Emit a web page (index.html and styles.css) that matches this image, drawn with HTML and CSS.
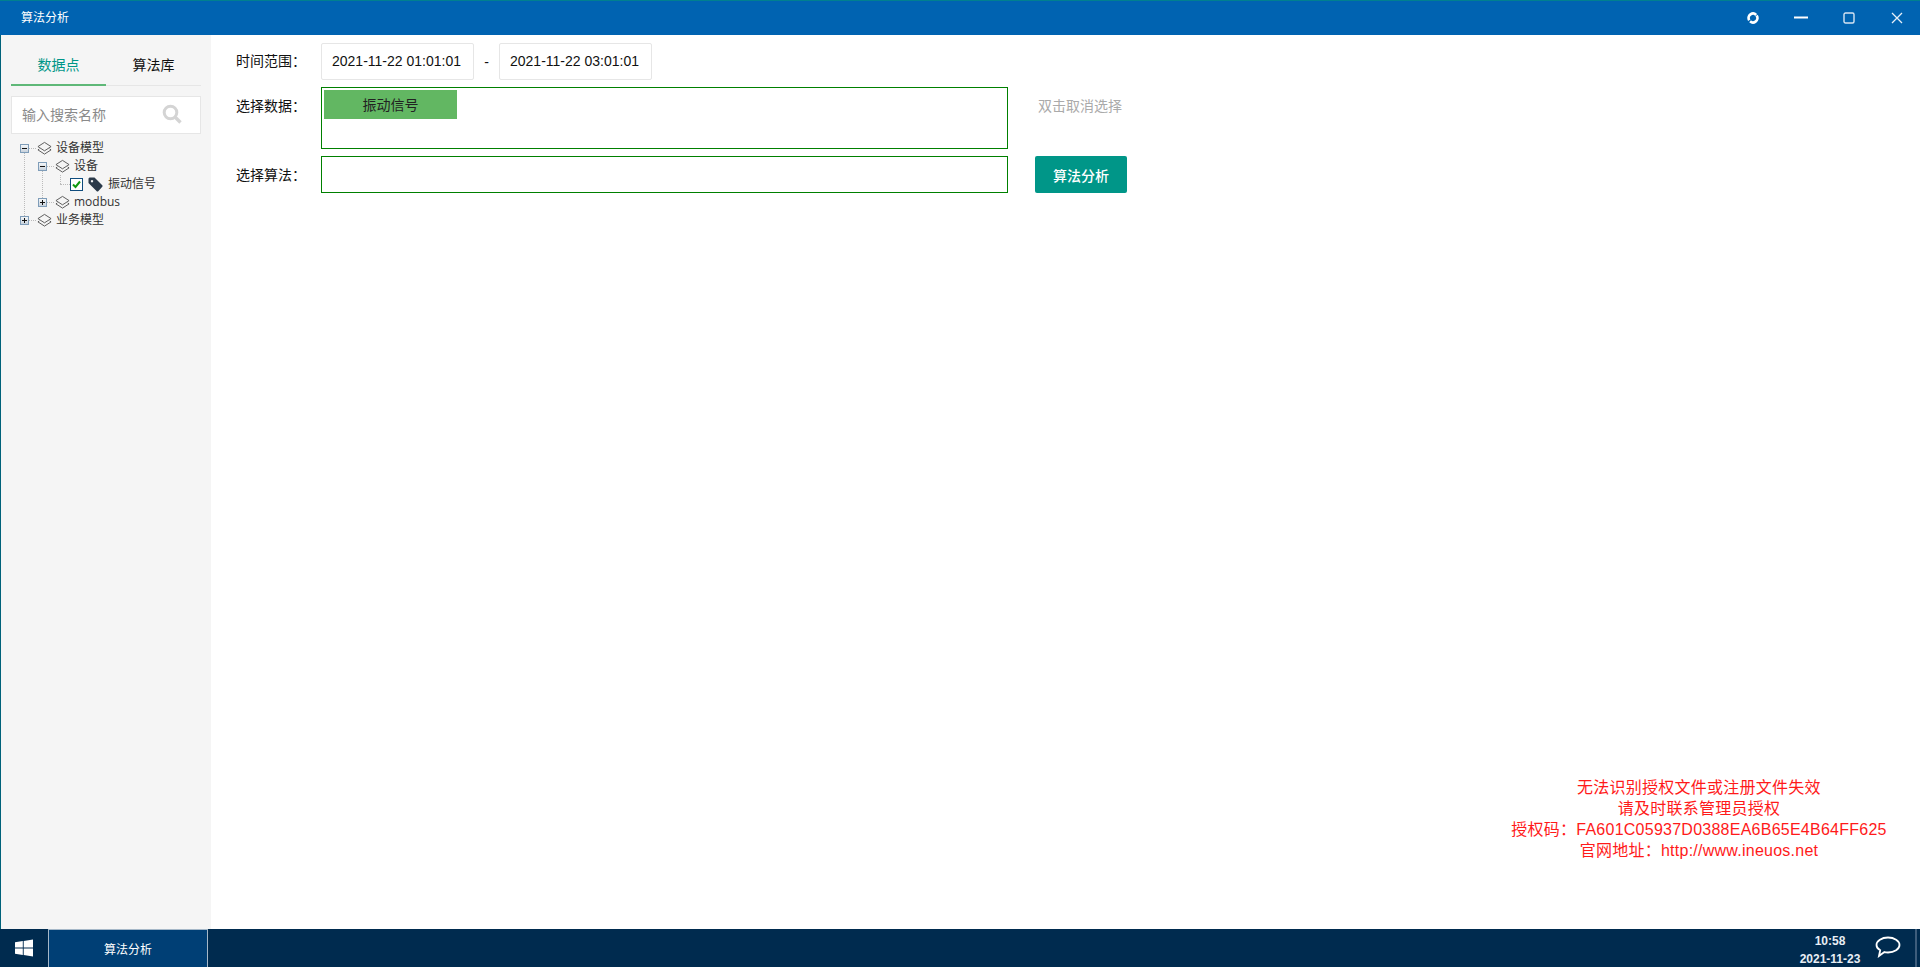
FILE: index.html
```html
<!DOCTYPE html>
<html lang="zh">
<head>
<meta charset="utf-8">
<title>算法分析</title>
<link rel="stylesheet" href="styles.css">
</head>
<body>
<div class="window">
  <header class="titlebar">
    <span class="title">算法分析</span>
    <div class="controls">
      <button class="ctl"><svg width="14" height="14" viewBox="0 0 14 14"><circle cx="7" cy="7" r="4.400" fill="none" stroke="#fff" stroke-width="2.700" stroke-dasharray="12.400 1.420" transform="rotate(-35 7 7)"/></svg></button>
      <button class="ctl"><svg width="14" height="14" viewBox="0 0 14 14"><path d="M0 6.500h14" stroke="#fff" stroke-width="2"/></svg></button>
      <button class="ctl"><svg width="12" height="12" viewBox="0 0 12 12"><rect x="1" y="1" width="10" height="10" rx="1.500" fill="none" stroke="#d5e4f2" stroke-width="1.400"/></svg></button>
      <button class="ctl"><svg width="12" height="12" viewBox="0 0 12 12"><path d="M1 1l10 10M11 1L1 11" stroke="#e6eff8" stroke-width="1.300"/></svg></button>
    </div>
  </header>

  <div class="body">
    <aside class="side">
      <div class="tabs">
        <div class="tab active">数据点</div>
        <div class="tab">算法库</div>
      </div>
      <div class="search">
        <span class="placeholder">输入搜索名称</span>
        <svg class="search-icon" width="20" height="20" viewBox="0 0 20 20"><circle cx="8.500" cy="8.500" r="6.300" fill="none" stroke="#d4d4d4" stroke-width="3"/><path d="M13.500 13.500l5 5" stroke="#d4d4d4" stroke-width="3.400"/></svg>
      </div>
      <ul class="tree">
        <li class="node">
          <div class="row">
            <span class="sw"><svg width="7" height="7" viewBox="0 0 7 7"><path d="M1 3.500h5" stroke="#111" stroke-width="1"/></svg></span>
            <svg class="layers" width="15" height="16" viewBox="0 0 16 16"><use href="#layer"/></svg>
            <span class="lbl">设备模型</span>
          </div>
          <ul class="tree sub">
            <li class="node">
              <div class="row">
                <span class="sw"><svg width="7" height="7" viewBox="0 0 7 7"><path d="M1 3.500h5" stroke="#111" stroke-width="1"/></svg></span>
                <svg class="layers" width="15" height="16" viewBox="0 0 16 16"><use href="#layer"/></svg>
                <span class="lbl">设备</span>
              </div>
              <ul class="tree sub">
                <li class="node leaf">
                  <div class="row">
                    <span class="check"><svg width="11" height="11" viewBox="0 0 11 11"><path d="M2 5.500l2.500 2.500L9 2.500" fill="none" stroke="#119911" stroke-width="2"/></svg></span>
                    <svg class="tag" width="15" height="15" viewBox="0 0 15 15"><path d="M0.500 1.500L1.500 .5h5l8 8v1l-4.500 5h-1l-8.500-8.500zM4 3a1.200 1.200 0 1 0 .01 0z" fill="#2b3a4a" fill-rule="evenodd"/></svg>
                    <span class="lbl">振动信号</span>
                  </div>
                </li>
              </ul>
            </li>
            <li class="node">
              <div class="row">
                <span class="sw"><svg width="7" height="7" viewBox="0 0 7 7"><path d="M1 3.500h5M3.500 1v5" stroke="#111" stroke-width="1"/></svg></span>
                <svg class="layers" width="15" height="16" viewBox="0 0 16 16"><use href="#layer"/></svg>
                <span class="lbl">modbus</span>
              </div>
            </li>
          </ul>
        </li>
        <li class="node">
          <div class="row">
            <span class="sw"><svg width="7" height="7" viewBox="0 0 7 7"><path d="M1 3.500h5M3.500 1v5" stroke="#111" stroke-width="1"/></svg></span>
            <svg class="layers" width="15" height="16" viewBox="0 0 16 16"><use href="#layer"/></svg>
            <span class="lbl">业务模型</span>
          </div>
        </li>
      </ul>
    </aside>

    <main class="main">
      <div class="form-row">
        <label class="lab">时间范围：</label>
        <div class="date">2021-11-22 01:01:01</div>
        <span class="dash">-</span>
        <div class="date">2021-11-22 03:01:01</div>
      </div>
      <div class="form-row">
        <label class="lab lab-top">选择数据：</label>
        <div class="pick pick-data"><div class="chip">振动信号</div></div>
        <span class="hint">双击取消选择</span>
      </div>
      <div class="form-row">
        <label class="lab lab-algo">选择算法：</label>
        <div class="pick pick-algo"></div>
        <button class="go">算法分析</button>
      </div>
    </main>

    <div class="notice">
      <div>无法识别授权文件或注册文件失效</div>
      <div>请及时联系管理员授权</div>
      <div>授权码：FA601C05937D0388EA6B65E4B64FF625</div>
      <div>官网地址：http://www.ineuos.net</div>
    </div>
  </div>

  <footer class="taskbar">
    <div class="start"><svg width="18" height="18" viewBox="0 0 18 18"><path d="M0 3.200l7.800-1.100v6.500H0zM8.700 2L18 .5v8.100H8.700zM0 9.500h7.800v6.400L0 14.800zM8.700 9.500H18v8l-9.300-1.400z" fill="#fff"/></svg></div>
    <div class="task">算法分析</div>
    <div class="clock"><div>10:58</div><div>2021-11-23</div></div>
    <svg class="chat" width="26" height="22" viewBox="0 0 26 22"><path d="M13 1.500c6.300 0 11.500 3.300 11.500 7.500S19.300 16.500 13 16.500c-1.300 0-2.500-.1-3.600-.4L4 20l1.200-5.700C2.900 13 1.500 11.100 1.500 9 1.500 4.800 6.700 1.500 13 1.500z" fill="none" stroke="#fff" stroke-width="1.800"/></svg>
    <div class="peek"></div>
  </footer>
</div>

<svg class="defs" width="0" height="0">
  <defs>
    <g id="layer" fill="none" stroke="#555" stroke-width="1">
      <path d="M8 2L15 6.500 8 11 1 6.500z"/>
      <path d="M2.500 9L1 10 8 14.500 15 10 13.500 9"/>
    </g>
  </defs>
</svg>
</body>
</html>
```
FILE: styles.css
```css
* { box-sizing: border-box; }
html, body { margin: 0; padding: 0; height: 100%; overflow: hidden; }
body { background: #fff; color: #222; font-family: "Noto Sans CJK SC", "Liberation Sans", sans-serif; font-size: 14px; text-spacing-trim: space-all; }
.defs { position: absolute; }
ul { list-style: none; margin: 0; padding: 0; }

.window { display: flex; flex-direction: column; height: 967px; }

.titlebar { flex: 0 0 35px; display: flex; align-items: center; justify-content: space-between; background: #0063b1; border-top: 1px solid #00808f; padding-left: 21px; color: #fff; font-size: 12px; }
.title { line-height: 34px; position: relative; top: -1px; }
.controls { display: flex; margin-right: -1px; }
.ctl { width: 48px; height: 34px; padding: 0; border: 0; background: none; display: flex; align-items: center; justify-content: center; }

.body { flex: 1; display: flex; min-height: 0; position: relative; border-left: 1px solid #00627a; }
.side { width: 210px; flex: none; background: #f5f5f5; padding: 8px 10px 0; }

.tabs { display: flex; height: 43px; border-bottom: 1px solid #e6e6e6; }
.tab { flex: 0 0 95px; text-align: center; line-height: 43px; font-size: 14px; color: #111; }
.tab.active { color: #009688; border-bottom: 2px solid #5fb878; height: 43px; }

.search { position: relative; margin-top: 10px; height: 38px; width: 190px; background: #fff; border: 1px solid #e6e6e6; display: flex; align-items: center; padding-left: 10px; color: #808080; }
.placeholder { font-size: 14px; line-height: 34px; height: 36px; color: #8a8a8a; }
.search-icon { position: absolute; right: 18px; top: 7px; }

.tree { font-size: 12px; color: #333; }
.side > .tree { margin: 5px 0 0 9px; }
.tree.sub { margin-left: 18px; }
.node { position: relative; }
.row { position: relative; height: 18px; display: flex; align-items: center; }
.node:not(:last-child)::before { content: ""; position: absolute; left: 4px; top: 14px; bottom: -5px; border-left: 1px dotted #bbb; }
.row::before { content: ""; position: absolute; left: 9px; top: 9px; width: 7px; border-top: 1px dotted #bbb; }
.leaf::before { content: ""; position: absolute; left: 4px; top: 0; height: 9px; border-left: 1px dotted #bbb; }
.leaf .row::before { left: 4px; width: 10px; }
.sw { width: 9px; height: 9px; flex: none; border: 1px solid #7f9db9; background: linear-gradient(#f4f6f8, #c8d2dc); display: flex; align-items: center; justify-content: center; }
.layers { flex: none; margin: 0 4px 0 8px; position: relative; }
.lbl { line-height: 18px; white-space: nowrap; font-family: "Open Sans", "Noto Sans CJK SC", sans-serif; }
.check { position: relative; width: 13px; height: 13px; flex: none; margin-left: 14px; border: 1px solid #0f4c7d; background: #fff; display: flex; align-items: center; justify-content: center; }
.tag { flex: none; margin: 0 5px 0 5px; }

.main { flex: 1; padding: 8px 0 0 25px; min-width: 0; }
.form-row { display: flex; align-items: center; margin-bottom: 7px; height: 37px; }
.form-row:nth-child(2) { height: 62px; align-items: flex-start; }
.lab { width: 85px; flex: none; font-size: 14px; line-height: 35px; height: 37px; color: #111; }
.lab-top { line-height: 36px; }
.lab-algo { line-height: 37px; }
.date { width: 153px; height: 37px; padding-right: 2px; border: 1px solid #e6e6e6; border-radius: 2px; text-align: center; font: 14px/35px "Liberation Sans", sans-serif; color: #111; }
.dash { width: 25px; text-align: center; font: 14px "Liberation Sans", sans-serif; color: #111; }
.pick { width: 687px; border: 1px solid #008000; background: #fff; flex: none; }
.pick-data { height: 62px; padding: 2px; }
.pick-algo { height: 37px; }
.chip { width: 133px; height: 29px; background: #62b762; color: #222; text-align: center; line-height: 29px; font-size: 14px; }
.hint { margin-left: 30px; line-height: 36px; color: #aaa; font-size: 14px; }
.go { margin-left: 27px; width: 92px; height: 37px; border: 0; border-radius: 2px; background: #009688; color: #fff; font: 500 14px "Noto Sans CJK SC", sans-serif; padding: 0; }

.notice { position: absolute; left: 1496px; top: 742px; width: 404px; text-align: center; color: #ff1a1a; letter-spacing: .25px; font: 16px/21px "Liberation Sans", "Noto Sans CJK SC", sans-serif; }

.taskbar { flex: 0 0 38px; height: 38px; display: flex; align-items: center; background: #002b4f; color: #fff; }
.start { width: 48px; height: 38px; display: flex; align-items: center; justify-content: center; }
.task { width: 160px; height: 38px; background: #003f75; border-left: 1px solid #a6b8c8; border-right: 1px solid #a6b8c8; border-top: 1px solid #a6b8c8; text-align: center; line-height: 37px; font-size: 12px; }
.clock { margin-left: auto; width: 90px; height: 38px; padding-top: 3px; text-align: center; font: bold 12px/18px "Liberation Sans", sans-serif; color: #e8eef4; }
.chat { margin: 0 14px 2px 0; flex: none; }
.peek { width: 2px; height: 38px; background: #3d5d7c; margin-right: 3px; }
```
